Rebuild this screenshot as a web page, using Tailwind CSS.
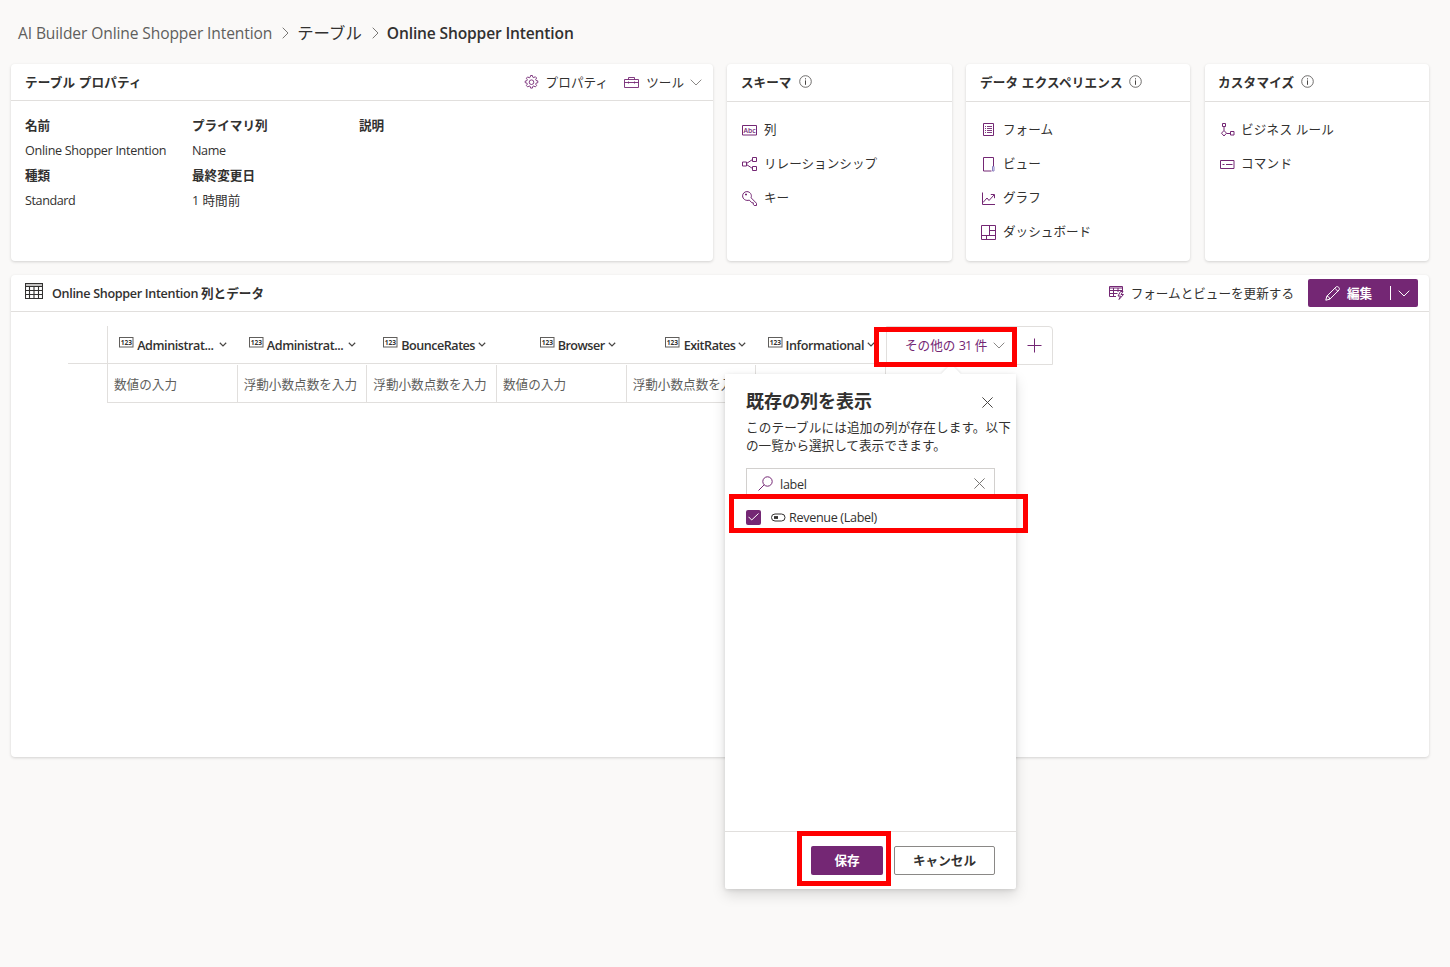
<!DOCTYPE html>
<html lang="ja">
<head>
    <meta charset="UTF-8">
    <meta name="viewport" content="width=device-width, initial-scale=1.0">
    <title>Online Shopper Intention</title>
    <script src="https://cdn.jsdelivr.net/npm/@tailwindcss/browser@4"></script>
</head>
<body class="relative h-[967px] w-[1450px] overflow-hidden bg-[#faf9f8] font-['Open_Sans','Noto_Sans_CJK_JP',sans-serif] text-[12.6px] leading-[18px] text-[#323130]">

    <!-- Shared icons -->
    <svg class="hidden">
        <symbol id="info" viewBox="0 0 13 13">
            <circle cx="6.5" cy="6.5" r="5.8" fill="none" stroke="#605e5c" stroke-width="0.9"/>
            <path d="M6.5 5.4V9.8M6.5 3.3v1.1" fill="none" stroke="#484644"/>
        </symbol>
        <symbol id="number" viewBox="0 0 15 11">
            <rect x="0.5" y="0.5" width="13.5" height="9.5" fill="none" stroke="#605e5c"/>
            <text x="7.3" y="7.7" text-anchor="middle" font-size="6.6" font-weight="700" letter-spacing="0" fill="#323130">123</text>
        </symbol>
        <symbol id="caret" viewBox="0 0 8 5">
            <path d="M0.8 0.8L4 3.9 7.2 0.8" fill="none" stroke="#484644" stroke-width="1.2"/>
        </symbol>
        <symbol id="chevron" viewBox="0 0 12 7">
            <path d="M0.7 0.7L6 6 11.3 0.7" fill="none" stroke="currentColor"/>
        </symbol>
    </svg>

    <!-- Breadcrumb -->
    <nav class="flex h-16 items-center pl-[18px] pt-[1px] text-[15.6px]">
        <span class="tracking-[-0.12px] text-[#605e5c]">AI Builder Online Shopper Intention</span>
        <svg class="ml-[10px] mr-[8px] h-3 w-[7px] text-[#797775]" viewBox="0 0 7 12" fill="none" stroke="currentColor"><path d="M0.7 0.7L6 6 0.7 11.3"/></svg>
        <span class="text-[16.4px]">テーブル</span>
        <svg class="ml-[10px] mr-[8px] h-3 w-[7px] text-[#797775]" viewBox="0 0 7 12" fill="none" stroke="currentColor"><path d="M0.7 0.7L6 6 0.7 11.3"/></svg>
        <span class="font-semibold tracking-[-0.16px]">Online Shopper Intention</span>
    </nav>

    <!-- Top cards -->
    <div class="ml-[11px] flex h-[197px] w-[1418px] gap-[14px]">
        <section class="w-[702px] rounded-[4px] bg-white shadow-[0_1px_3px_rgba(0,0,0,0.16)]">
            <div class="flex h-[37px] items-center border-b border-[#e1dfdd] pl-[14px] pr-[11px]">
                <h2 class="flex-1 pt-[1px] font-bold tracking-[0.16px]">テーブル プロパティ</h2>
                <svg class="mr-[7px] h-[15px] w-[15px] text-[#742774]" viewBox="0 0 15 15" fill="none" stroke="currentColor" stroke-width="0.9" stroke-linejoin="round">
                    <path d="M6.2 2.2L6.6.5h1.800l.4 1.700 1 .4 1.500-.9 1.300 1.300-.9 1.500.4 1 1.700.4v1.800l-1.700.4-.4 1 .9 1.500-1.300 1.300-1.500-.9-1 .4-.4 1.700H6.600l-.4-1.700-1-.4-1.500.9-1.300-1.300.9-1.500-.4-1-1.700-.4V6.100l1.700-.4.4-1-.9-1.500L3.700 1.900l1.500.9z"/>
                    <circle cx="7.500" cy="7.200" r="2.300"/>
                </svg>
                <span class="pt-[1px] tracking-[0.1px]">プロパティ</span>
                <svg class="ml-[16px] mr-[7px] h-[13px] w-[15px] text-[#742774]" viewBox="0 0 15 13" fill="none" stroke="currentColor" stroke-width="0.9">
                    <path d="M0.500 3.500h14v8h-14zM4.500 3.500v-2h6v2M0.500 6.500h14M4.500 5.500v2M10.500 5.500v2"/>
                </svg>
                <span class="pt-[1px]">ツール</span>
                <svg class="ml-[6px] h-[7px] w-3 text-[#8a8886]"><use href="#chevron"/></svg>
            </div>
            <div class="grid auto-rows-[25px] grid-cols-[167px_167px_167px] items-center pl-[14px] pt-3">
                <b>名前</b>
                <b>プライマリ列</b>
                <b>説明</b>
                <span class="tracking-[-0.31px]">Online Shopper Intention</span>
                <span class="tracking-[-0.4px]">Name</span>
                <span></span>
                <b>種類</b>
                <b>最終変更日</b>
                <span></span>
                <span class="tracking-[-0.42px]">Standard</span>
                <span>1 時間前</span>
            </div>
        </section>

        <section class="w-[225px] rounded-[4px] bg-white shadow-[0_1px_3px_rgba(0,0,0,0.16)]">
            <div class="flex h-[38px] items-center border-b border-[#e1dfdd] pb-[1px] pl-[14px]">
                <h2 class="pt-[1px] font-bold">スキーマ</h2>
                <svg class="mb-[2px] ml-2 h-[13px] w-[13px]"><use href="#info"/></svg>
            </div>
            <ul class="pl-[15px] pt-[11px]">
                <li class="flex h-[34px] items-center gap-[7px]">
                    <svg class="h-[11px] w-[15px] text-[#742774]" viewBox="0 0 15 11">
                        <path d="M0.500 0.500h14v9.500h-14z" fill="none" stroke="currentColor"/>
                        <text x="7.500" y="7.800" text-anchor="middle" font-size="6.800" font-weight="600" fill="currentColor">Abc</text>
                    </svg>
                    <span>列</span>
                </li>
                <li class="flex h-[34px] items-center gap-[7px]">
                    <svg class="h-[14px] w-[15px] text-[#742774]" viewBox="0 0 15 14" fill="none" stroke="currentColor">
                        <path d="M0.500 5h4v4h-4zM10.500 0.500h4v4h-4zM10.500 9.500h4v4h-4zM4.500 6.500l6-4M4.500 7.500l6 4"/>
                    </svg>
                    <span>リレーションシップ</span>
                </li>
                <li class="flex h-[34px] items-center gap-[7px]">
                    <svg class="h-[15px] w-[15px] text-[#742774]" viewBox="0 0 15 15" fill="none" stroke="currentColor" stroke-linejoin="round">
                        <path d="M9.100 6.800l5.400 5.500v2.200h-2.300l-.9-1.200v-1.500H9.900L7.300 9.100C3.900 10.300.600 8 .600 4.900.600 2.500 2.500.600 4.900.600c3.100 0 5.300 3 4.200 6.200z"/>
                        <path d="M3.500 3h1v1h-1z"/>
                    </svg>
                    <span>キー</span>
                </li>
            </ul>
        </section>

        <section class="w-[224px] rounded-[4px] bg-white shadow-[0_1px_3px_rgba(0,0,0,0.16)]">
            <div class="flex h-[38px] items-center border-b border-[#e1dfdd] pb-[1px] pl-[14px]">
                <h2 class="pt-[1px] font-bold tracking-[0.2px]">データ エクスペリエンス</h2>
                <svg class="mb-[2px] ml-[6px] h-[13px] w-[13px]"><use href="#info"/></svg>
            </div>
            <ul class="pl-[15px] pt-[11px]">
                <li class="flex h-[34px] items-center gap-[7px]">
                    <svg class="mb-[2px] h-[15px] w-[15px] text-[#742774]" viewBox="0 0 15 15" fill="none" stroke="currentColor">
                        <path d="M2.500 1.500h10v12h-10z"/>
                        <path d="M4 4.500h1M6 4.500h5M4 6.500h1M6 6.500h5M4 8.500h1M6 8.500h5M4 10.500h1M6 10.500h5" stroke-width="0.9"/>
                    </svg>
                    <span>フォーム</span>
                </li>
                <li class="flex h-[34px] items-center gap-[7px]">
                    <svg class="h-[15px] w-[15px] text-[#742774]" viewBox="0 0 15 15" fill="none" stroke="currentColor">
                        <path d="M12.500 9V0.500h-10v13.500h8"/>
                        <path d="M11.500 9.500h1.500v4.500h-1.500z" stroke="#8a7fc0"/>
                    </svg>
                    <span>ビュー</span>
                </li>
                <li class="flex h-[34px] items-center gap-[7px]">
                    <svg class="h-[15px] w-[15px] text-[#742774]" viewBox="0 0 15 15" fill="none" stroke="currentColor">
                        <path d="M1.500 1.500v12H14M2 11.500l4-4.500 2 2.500L13 4M9.800 3.500h3.700v3.700"/>
                    </svg>
                    <span>グラフ</span>
                </li>
                <li class="flex h-[34px] items-center gap-[7px]">
                    <svg class="mt-[1px] h-[15px] w-[15px] text-[#742774]" viewBox="0 0 15 15" fill="none" stroke="currentColor">
                        <path d="M0.500 0.500h14v14h-14zM8.500 0.500v10M0.500 10.500h14M8.500 5.500h6M5.500 10.500v4"/>
                    </svg>
                    <span>ダッシュボード</span>
                </li>
            </ul>
        </section>

        <section class="ml-[1px] w-[224px] rounded-[4px] bg-white shadow-[0_1px_3px_rgba(0,0,0,0.16)]">
            <div class="flex h-[38px] items-center border-b border-[#e1dfdd] pb-[1px] pl-[13px]">
                <h2 class="pt-[1px] font-bold tracking-[0.2px]">カスタマイズ</h2>
                <svg class="mb-[2px] ml-[7px] h-[13px] w-[13px]"><use href="#info"/></svg>
            </div>
            <ul class="pl-[15px] pt-[11px]">
                <li class="flex h-[34px] items-center gap-[6px]">
                    <svg class="h-[14px] w-[15px] text-[#742774]" viewBox="0 0 15 14" fill="none" stroke="currentColor">
                        <path d="M2.500 0.500h3v3h-3zM4 3.500v4M4 7.500l2.500 2.700L4 13l-2.500-2.800zM6.500 10.500h4M10.500 8.500h3.500v3.500h-3.500z"/>
                    </svg>
                    <span class="tracking-[0.2px]">ビジネス ルール</span>
                </li>
                <li class="flex h-[34px] items-center gap-[6px]">
                    <svg class="h-[9px] w-[15px] text-[#742774]" viewBox="0 0 15 9" fill="none" stroke="currentColor">
                        <path d="M0.500 0.500h13.500v8h-13.500zM2.500 4.500h2M6 4.500h6.500"/>
                    </svg>
                    <span class="tracking-[0.2px]">コマンド</span>
                </li>
            </ul>
        </section>
    </div>

    <!-- Columns and data -->
    <section class="ml-[11px] mt-[14px] h-[482px] w-[1418px] rounded-[4px] bg-white shadow-[0_1px_3px_rgba(0,0,0,0.16)]">
        <div class="flex h-[37px] items-center border-b border-[#e1dfdd] pl-[14px] pr-[11px]">
            <svg class="mb-[4px] mr-[9px] h-[16px] w-[18px]" viewBox="0 0 18 16" fill="none" stroke="#323130">
                <path d="M0.500 0.500h17v15h-17zM0.500 3.500h17M0.500 7.500h17M0.500 11.500h17M4.500 3.500v12M9 3.500v12M13.500 3.500v12" stroke-width="1.1"/>
                <path d="M1 2h16" stroke="#8a8886"/>
            </svg>
            <h2 class="flex-1 pt-[2px] font-bold"><span class="font-semibold tracking-[-0.33px]">Online Shopper Intention </span>列とデータ</h2>
            <svg class="mr-[7px] h-[14px] w-[15px] text-[#742774]" viewBox="0 0 15 14" fill="none" stroke="currentColor">
                <path d="M7 10.500H0.500V0.500h13V5M0.500 2h13M0.500 4.500h13M0.500 7.500h8M4.500 2v8.500M9 2v4"/>
                <path d="M11.500 5.500L9 10h2.500l-1.500 3.500 4.500-5h-2.500l2-3z"/>
            </svg>
            <span class="pt-[2px]">フォームとビューを更新する</span>
            <div class="ml-[14px] flex h-7 w-[110px] items-center rounded-[2px] bg-[#742774] text-white">
                <svg class="ml-[17px] mr-[7px] h-[15px] w-[15px]" viewBox="0 0 15 15" fill="none" stroke="currentColor" stroke-linejoin="round">
                    <path d="M0.800 14.200l1-4L11 1c1.800-1.400 4.300 1.200 3 3L4.800 13.200zM1.800 10.200c1.700.2 2.700 1.200 3 3M9.800 2.200l3 3"/>
                </svg>
                <b class="pt-[1px]">編集</b>
                <span class="ml-[18px] h-[14px] w-px bg-white"></span>
                <svg class="ml-[7px] h-[7px] w-3"><use href="#chevron"/></svg>
            </div>
        </div>

        <div class="ml-[57px] mt-[14px] w-[985px]">
            <div class="flex h-[38px]">
                <div class="w-[39px] border-b border-[#e1dfdd]"></div>
                <div class="grid w-[779px] grid-cols-6 border-b border-l border-[#e1dfdd] font-semibold tracking-[-0.42px]">
                    <div class="flex items-center justify-end pr-[11px]">
                        <svg class="mb-1 mr-[3px] h-[11px] w-[15px]"><use href="#number"/></svg>
                        <span class="pt-[2px]">Administrat...</span>
                        <svg class="mb-[1px] ml-[5px] h-[5px] w-2"><use href="#caret"/></svg>
                    </div>
                    <div class="flex items-center justify-end pr-[11px]">
                        <svg class="mb-1 mr-[3px] h-[11px] w-[15px]"><use href="#number"/></svg>
                        <span class="pt-[2px]">Administrat...</span>
                        <svg class="mb-[1px] ml-[5px] h-[5px] w-2"><use href="#caret"/></svg>
                    </div>
                    <div class="flex items-center justify-end pr-[11px]">
                        <svg class="mb-1 mr-[3px] h-[11px] w-[15px]"><use href="#number"/></svg>
                        <span class="pt-[2px] tracking-[-0.5px]">BounceRates</span>
                        <svg class="mb-[1px] ml-[3px] h-[5px] w-2"><use href="#caret"/></svg>
                    </div>
                    <div class="flex items-center justify-end pr-[11px]">
                        <svg class="mb-1 mr-[3px] h-[11px] w-[15px]"><use href="#number"/></svg>
                        <span class="pt-[2px] tracking-[-0.5px]">Browser</span>
                        <svg class="mb-[1px] ml-[3px] h-[5px] w-2"><use href="#caret"/></svg>
                    </div>
                    <div class="flex items-center justify-end pr-[10px]">
                        <svg class="mb-1 mr-[4px] h-[11px] w-[15px]"><use href="#number"/></svg>
                        <span class="pt-[2px] tracking-[-0.5px]">ExitRates</span>
                        <svg class="mb-[1px] ml-[3px] h-[5px] w-2"><use href="#caret"/></svg>
                    </div>
                    <div class="flex items-center justify-end pr-[11px]">
                        <svg class="mb-1 mr-[3px] h-[11px] w-[15px]"><use href="#number"/></svg>
                        <span class="pt-[2px]">Informational</span>
                        <svg class="mb-[1px] ml-[3px] h-[5px] w-2"><use href="#caret"/></svg>
                    </div>
                </div>
                <div class="flex h-[39px] w-[167px] items-center rounded-tr-[4px] border border-[#e1dfdd] text-[#742774]">
                    <span class="ml-[18px] whitespace-nowrap">その他の <span class="tracking-[-0.8px]">31</span> 件</span>
                    <svg class="ml-[6px] h-[7px] w-3 shrink-0 text-[#8a8886]"><use href="#chevron"/></svg>
                    <svg class="ml-[22px] h-[15px] w-[15px] shrink-0" viewBox="0 0 15 15" fill="none" stroke="currentColor"><path d="M7.500 0.500v14M0.500 7.500h14"/></svg>
                </div>
            </div>
            <div class="ml-[39px] grid h-[39px] w-[779px] grid-cols-6 border-b border-l border-[#e1dfdd] pt-[1px] text-[#605e5c]">
                <div class="flex items-center border-r border-[#e1dfdd] pl-[6px] pt-[2px]">数値の入力</div>
                <div class="flex items-center border-r border-[#e1dfdd] pl-[6px] pt-[2px]">浮動小数点数を入力</div>
                <div class="flex items-center border-r border-[#e1dfdd] pl-[6px] pt-[2px]">浮動小数点数を入力</div>
                <div class="flex items-center border-r border-[#e1dfdd] pl-[6px] pt-[2px]">数値の入力</div>
                <div class="flex items-center border-r border-[#e1dfdd] pl-[6px] pt-[2px]">浮動小数点数を入力</div>
                <div class="border-r border-[#e1dfdd]"></div>
            </div>
        </div>
    </section>

    <!-- Column picker callout -->
    <div class="absolute left-[725px] top-[374px] flex h-[515px] w-[291px] flex-col rounded-[2px] bg-white shadow-[0_6px_14px_rgba(0,0,0,0.13),0_1px_4px_rgba(0,0,0,0.11)]">
        <div class="absolute left-[219px] top-[-7px] h-[14px] w-[14px] rotate-45 bg-white shadow-[-1px_-1px_2px_rgba(0,0,0,0.08)]"></div>
        <div class="relative flex-1 bg-white pl-[21px] pt-[15px]">
            <div class="flex h-[23px] items-center justify-between pr-[23px]">
                <h2 class="text-[18px] font-bold">既存の列を表示</h2>
                <svg class="mt-[4px] h-[11px] w-[11px]" viewBox="0 0 11 11" fill="none" stroke="#484644"><path d="M0.400 0.400l10.200 10.200M10.600 0.400L0.400 10.600"/></svg>
            </div>
            <p class="mt-[7px] whitespace-nowrap tracking-[0.12px]">このテーブルには追加の列が存在します。以下<br><span class="tracking-normal">の一覧から選択して表示できます。</span></p>
            <div class="mt-[13px] flex h-[29px] w-[249px] items-center border border-[#d2d0ce] pl-[11px] pr-[9px] pt-[2px]">
                <svg class="h-[15px] w-[15px]" viewBox="0 0 15 15" fill="none" stroke="#742774"><circle cx="9.500" cy="5.500" r="4.700"/><path d="M6.200 8.800L0.500 14.500"/></svg>
                <span class="ml-[7px] flex-1 pt-[2px] tracking-[-0.3px]">label</span>
                <svg class="h-[11px] w-[11px]" viewBox="0 0 11 11" fill="none" stroke="#797775"><path d="M0.400 0.400l10.200 10.200M10.600 0.400L0.400 10.600"/></svg>
            </div>
            <div class="mt-[11px] flex h-[18px] items-center">
                <span class="flex h-[15px] w-[15px] items-center justify-center rounded-[2px] bg-[#742774]">
                    <svg class="h-[8px] w-[11px]" viewBox="0 0 11 8" fill="none" stroke="#fff"><path d="M0.500 3.800l3.200 3.200L10.500 0.500"/></svg>
                </span>
                <svg class="ml-[10px] h-[9px] w-[15px]" viewBox="0 0 15 9" fill="none" stroke="#323130"><rect x="0.500" y="1" width="13.500" height="7" rx="3.500"/><path d="M3 4.500h4" stroke-width="2.800"/></svg>
                <span class="ml-[3px] pt-[2px] tracking-[-0.33px]">Revenue (Label)</span>
            </div>
        </div>
        <div class="flex h-[58px] justify-end gap-[11px] border-t border-[#e1dfdd] pr-[21px] pt-[14px]">
            <div class="flex h-[29px] w-[72px] items-center justify-center rounded-[2px] bg-[#742774] font-bold text-white">保存</div>
            <div class="flex h-[29px] w-[101px] items-center justify-center rounded-[2px] border border-[#8a8886] font-bold">キャンセル</div>
        </div>
    </div>

    <!-- Highlights -->
    <div class="absolute left-[874px] top-[327px] h-[40px] w-[143px] border-[5px] border-[#ff0000]"></div>
    <div class="absolute left-[729px] top-[494px] h-[39px] w-[299px] border-[5px] border-[#ff0000]"></div>
    <div class="absolute left-[797px] top-[831px] h-[55px] w-[94px] border-[5px] border-[#ff0000]"></div>
</body>
</html>
